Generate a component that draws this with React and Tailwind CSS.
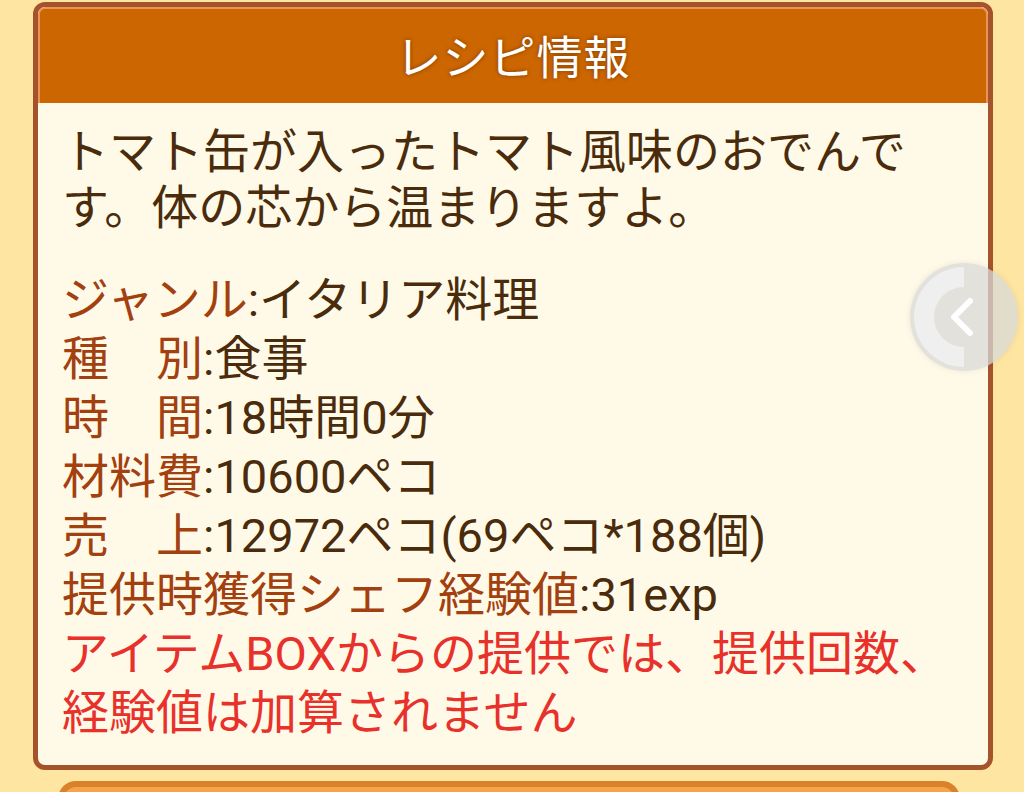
// Recipe info card — header bar, description, labelled rows, red notice.
// A translucent "back" handle floats on the right edge.

const ROWS = [
  { label: 'ジャンル', value: 'イタリア料理' },
  { label: '種　別', value: '食事' },
  { label: '時　間', value: '18時間0分' },
  { label: '材料費', value: '10600ペコ' },
  { label: '売　上', value: '12972ペコ(69ペコ*188個)' },
  { label: '提供時獲得シェフ経験値', value: '31exp' },
];

function SideHandle() {
  return (
    <div className="absolute left-[910px] top-[263px] w-[108px] h-[108px] rounded-full bg-[#d8d8d8]/75 shadow-[0_0_6px_rgba(0,0,0,0.08)]">
      <svg viewBox="0 0 108 108" className="w-full h-full">
        <path d="M54 4 A50 50 0 0 0 54 104 L54 84 A30 30 0 0 1 54 24 Z" fill="#efefef" />
        <path d="M60 38 L44 54 L60 70" fill="none" stroke="#ffffff" strokeWidth="6" strokeLinecap="round" strokeLinejoin="round" />
      </svg>
    </div>
  );
}

export default function App() {
  return (
    <div
      className="relative w-[1024px] h-[792px] overflow-hidden bg-[#ffe5a2]"
      style={{ fontFamily: 'Roboto, "Noto Sans CJK JP", sans-serif' }}
    >
      <div className="pt-[2px] pl-[33px]">
        <section className="w-[960px] h-[768px] rounded-[12px] border-[5px] border-[#a5532b] bg-[#fffae8] overflow-hidden">
          <header className="h-[96px] bg-[#cc6600] border-t-2 border-x-2 border-[#ec9455] rounded-t-[7px] flex items-center justify-center">
            <h1
              className="text-white text-[46px] leading-none tracking-[1px] mt-[3px]"
              style={{ textShadow: '0 0 4px rgba(80,30,0,0.6)' }}
            >
              レシピ情報
            </h1>
          </header>

          <div className="pl-[24px] pt-[21px] whitespace-nowrap text-[47px]">
            <p className="leading-[56px] text-[#4a2c0c]">
              トマト缶が入ったトマト風味のおでんで<br />す。体の芯から温まりますよ。
            </p>

            <div className="mt-[34px] leading-[59px]">
              {ROWS.map((r) => (
                <div key={r.label}>
                  <span className="text-[#a3400f]">{r.label}</span>
                  <span className="text-[#4a2c0c]">:{r.value}</span>
                </div>
              ))}
              <div className="text-[#e8312b]">
                アイテムBOXからの提供では、提供回数、<br />経験値は加算されません
              </div>
            </div>
          </div>
        </section>
      </div>

      {/* next card peeking in below */}
      <div className="ml-[58px] mt-[11px] w-[902px] h-[40px] rounded-t-[18px] border-t-[6px] border-x-[6px] border-[#d9822b] bg-[#f6a44a]" />

      <SideHandle />
    </div>
  );
}
